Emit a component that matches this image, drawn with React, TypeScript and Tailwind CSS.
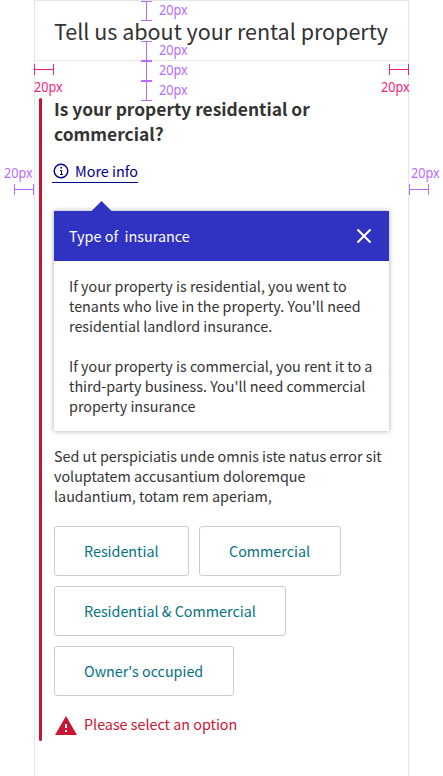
function VGuide() {
  return (
    <div className="flex h-5 gap-[7px]">
      <div className="h-5 w-[11px] border-y border-[#b56cff]">
        <div className="mx-auto h-full w-px bg-[#b56cff]" />
      </div>
      <Label className="-mt-px text-[#b56cff]" />
    </div>
  );
}

function HGuide() {
  return (
    <div className="flex h-[11px] w-5 items-center border-x border-current">
      <div className="h-px w-full bg-current" />
    </div>
  );
}

function Label({ className = "" }: { className?: string }) {
  return (
    <span className={`block w-[29px] origin-left scale-x-90 font-['Noto_Sans',sans-serif] text-[14px] leading-5 ${className}`}>
      20px
    </span>
  );
}

function Option({ text, className }: { text: string; className: string }) {
  return (
    <button className={`h-[50px] rounded-[3px] border border-[#ccc] pl-[29px] text-left text-[14.34px] whitespace-nowrap text-[#027180] ${className}`}>
      {text}
    </button>
  );
}

export default function App() {
  return (
    <div className="relative h-[776px] w-[443px] overflow-hidden bg-white pl-[34px] font-['Noto_Sans_CJK_SC',sans-serif] text-[#333]">
      <main className="h-full w-[375px] border-x border-t border-[#e5e5e5]">
        <header className="h-[60px] border-b border-[#e5e5e5] pt-[15px] pl-[19px]">
          <h1 className="text-[21.5px] leading-[30px] whitespace-nowrap">Tell us about your rental property</h1>
        </header>
        <section className="mt-[37px] flex h-[643px] pl-1">
          <div className="w-[3px] rounded-full bg-[#c91432]" />
          <div className="ml-3 w-[335px]">
            <h2 className="-mt-[2px] text-[17.4px] leading-[25px] font-bold whitespace-nowrap">
              Is your property residential or<br />commercial?
            </h2>
            <a className="mt-4 -ml-[2px] flex h-[21px] w-[86px] items-start border-b border-[#00008f] text-[14.4px] leading-5 whitespace-nowrap text-[#00008f]">
              <svg className="mt-[1px] ml-[1px] shrink-0" width="16" height="16" viewBox="0 0 16 16" fill="none" stroke="currentColor">
                <circle cx="8" cy="8" r="6.8" strokeWidth="1.4" />
                <path d="M7 7.5h1.5V11M7 11.5h3" strokeWidth="1" />
                <path d="M7.4 4.8h1.6" strokeWidth="1.5" />
              </svg>
              <span className="-mt-px ml-[6px]">More info</span>
            </a>
            <div className="relative mt-[28px] h-[220px] shadow-[0_0_5px_rgba(0,0,0,0.35)]">
              <svg className="absolute -top-[10px] left-[37px]" width="21" height="11">
                <path d="M0 10.5 10.5 0 21 10.5Z" fill="#3032c1" />
              </svg>
              <div className="flex h-[50px] items-center justify-between bg-[#3032c1] pr-[17px] pl-[15px] text-[14.4px] whitespace-pre text-white">
                <span>Type of  insurance</span>
                <svg width="16" height="16" viewBox="0 0 16 16" stroke="white" strokeWidth="2">
                  <path d="M1.5 1.5l13 13M14.5 1.5l-13 13" />
                </svg>
              </div>
              <div className="h-[170px] bg-white pt-[15px] pl-[15px] text-[14.34px] leading-5 whitespace-nowrap">
                <p>If your property is residential, you went to<br />tenants who live in the property. You'll need<br />residential landlord insurance.</p>
                <p className="mt-5">If your property is commercial, you rent it to a<br />third-party business. You'll need commercial<br />property insurance</p>
              </div>
            </div>
            <p className="mt-[15px] text-[14.34px] leading-5 whitespace-nowrap">
              Sed ut perspiciatis unde omnis iste natus error sit<br />voluptatem accusantium doloremque<br />laudantium, totam rem aperiam,
            </p>
            <div className="mt-5 flex flex-wrap gap-[10px]">
              <Option text="Residential" className="w-[135px]" />
              <Option text="Commercial" className="w-[142px]" />
              <Option text="Residential &amp; Commercial" className="w-[232px]" />
              <Option text="Owner's occupied" className="w-[180px]" />
            </div>
            <div className="mt-[18px] flex h-5 items-center text-[14.34px] leading-5 whitespace-nowrap text-[#c91432]">
              <svg className="mt-[3px] ml-[1px]" width="22" height="19" viewBox="0 0 22 19">
                <path d="M11 0 22 19H0Z" fill="currentColor" />
                <path d="M10 8h2v4h-2zM10 14h2v2h-2z" fill="white" />
              </svg>
              <span className="ml-[7px]">Please select an option</span>
            </div>
          </div>
        </section>
      </main>

      <div className="absolute top-px left-[141px]">
        <VGuide />
        <div className="mt-5">
          <VGuide />
          <VGuide />
          <VGuide />
        </div>
      </div>
      <div className="absolute top-16 left-[34px] flex w-[375px] justify-between text-[#f41e7e]">
        <div className="flex flex-col gap-[2px]">
          <HGuide />
          <Label />
        </div>
        <div className="flex flex-col items-end gap-[2px]">
          <HGuide />
          <Label className="-mr-px" />
        </div>
      </div>
      <div className="absolute top-[163px] left-[3px] flex gap-[375px] text-[#b56cff]">
        <div className="flex w-[31px] flex-col items-end gap-px">
          <Label className="mr-px" />
          <HGuide />
        </div>
        <div className="flex flex-col gap-px">
          <Label className="ml-[2px]" />
          <HGuide />
        </div>
      </div>
    </div>
  );
}
